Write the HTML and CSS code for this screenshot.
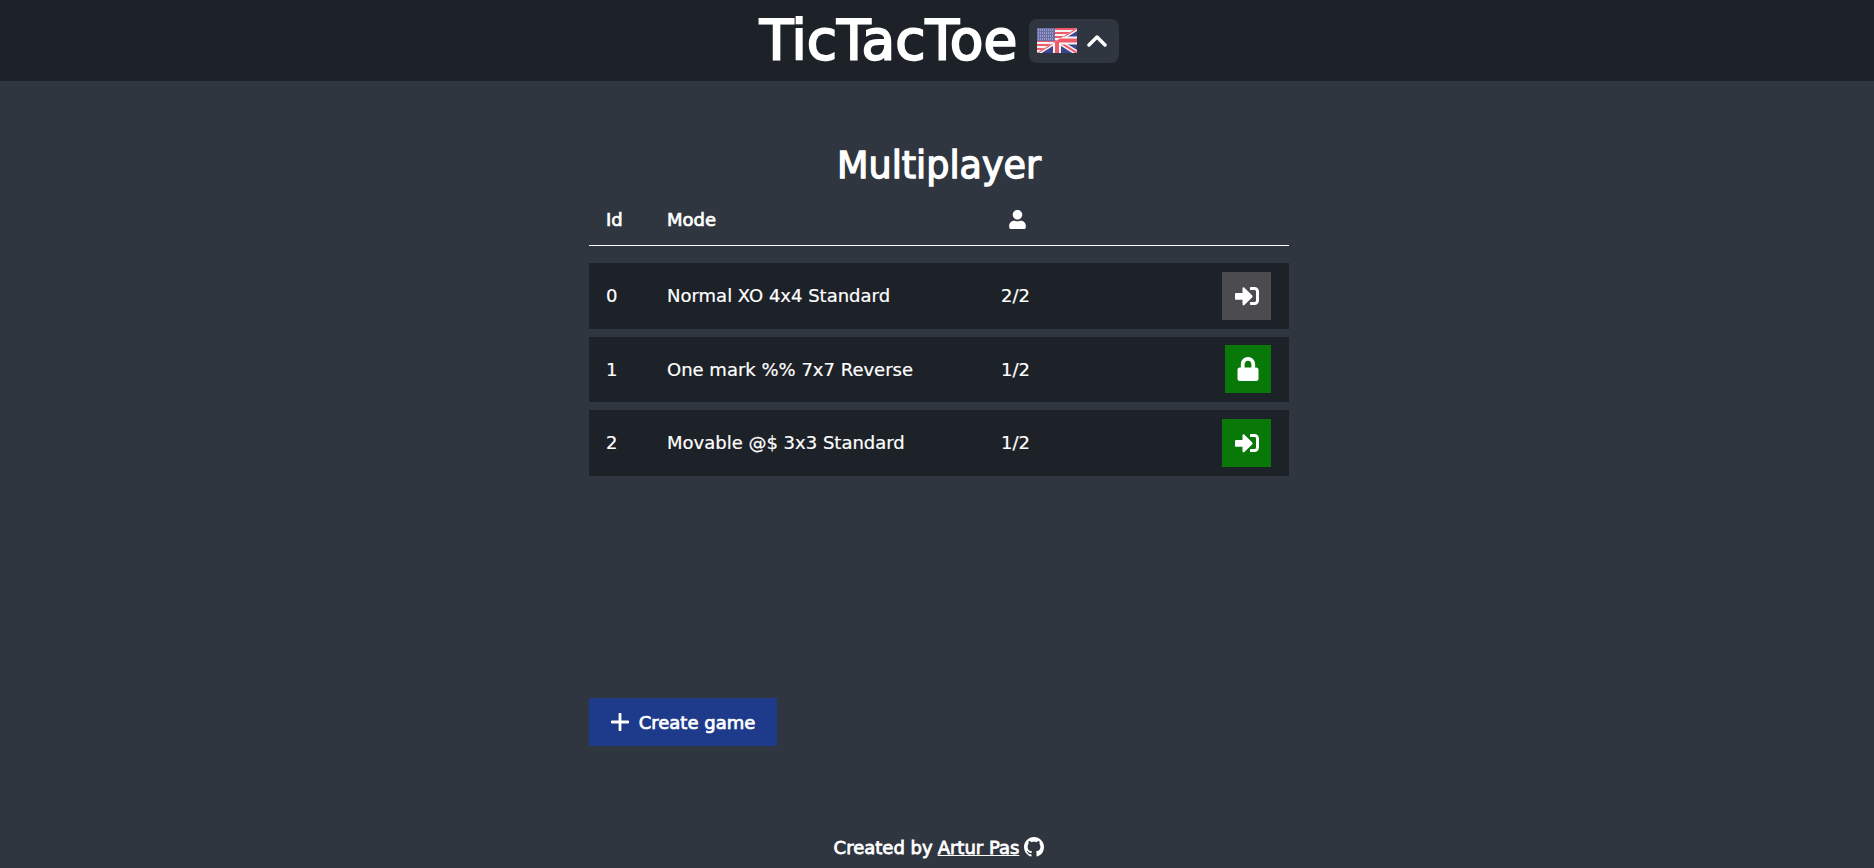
FILE: index.html
```html
<!DOCTYPE html>
<html>

<head>
  <title>TicTacToe</title>
  <link rel="stylesheet" href="styles.css">
</head>

<body>
  <header class="top-bar">
    <h1 class="logo-title">TicTacToe</h1>
    <button type="button" class="lang-switch">
      <svg class="flag" viewBox="0 0 40 25" aria-label="English">
        <defs>
          <clipPath id="flag-shape">
            <rect width="40" height="25" rx="1.5" />
          </clipPath>
          <clipPath id="uk-half">
            <polygon points="40,0 40,25 0,25" />
          </clipPath>
          <clipPath id="us-half">
            <polygon points="0,0 40,0 0,25" />
          </clipPath>
        </defs>
        <g clip-path="url(#flag-shape)">
          <rect width="40" height="25" fill="#f4f4f4" />
          <g clip-path="url(#us-half)">
            <path d="M0 1h40M0 5h40M0 9h40M0 13h40M0 17h40M0 21h40" stroke="#f05a68" stroke-width="2" />
            <rect width="18" height="13" fill="#6a6fa8" />
            <path d="M1 2h16M1 5h16M1 8h16M1 11h16" stroke="#c9cbe0" stroke-width="1" stroke-dasharray="1 1" />
          </g>
          <g clip-path="url(#uk-half)">
            <rect width="40" height="25" fill="#3c4590" />
            <path d="M0 25L40 0M0 0L40 25" stroke="#f4f4f4" stroke-width="5" />
            <path d="M0 25L40 0M0 0L40 25" stroke="#f05a68" stroke-width="2" />
            <path d="M20 0v25M0 12.500h40" stroke="#f4f4f4" stroke-width="8" />
            <path d="M20 0v25M0 12.500h40" stroke="#f05a68" stroke-width="4" />
          </g>
        </g>
      </svg>
      <svg class="chevron" viewBox="0 0 20 12">
        <path d="M2 10l8-8 8 8" />
      </svg>
    </button>
  </header>

  <main class="content">
    <h2 class="page-title">Multiplayer</h2>

    <div class="table-head game-row-grid">
      <span>Id</span>
      <span>Mode</span>
      <span class="players-head">
        <svg class="icon user-icon" viewBox="0 0 448 512">
          <path d="M224 256c70.700 0 128-57.300 128-128S294.700 0 224 0 96 57.300 96 128s57.300 128 128 128zm89.600 32h-16.700c-22.200 10.200-46.900 16-72.900 16s-50.600-5.800-72.900-16h-16.700C60.200 288 0 348.200 0 422.400V464c0 26.500 21.500 48 48 48h352c26.500 0 48-21.500 48-48v-41.600c0-74.200-60.200-134.400-134.400-134.400z" />
        </svg>
      </span>
    </div>

    <div class="game-list">
      <div class="game-row game-row-grid">
        <span>0</span>
        <span>Normal XO 4x4 Standard</span>
        <span>2/2</span>
        <button type="button" class="join-btn disabled">
          <svg class="icon" viewBox="0 0 512 512">
            <path d="M416 448h-84c-6.600 0-12-5.400-12-12v-40c0-6.600 5.400-12 12-12h84c17.700 0 32-14.300 32-32V160c0-17.700-14.300-32-32-32h-84c-6.600 0-12-5.400-12-12V76c0-6.600 5.400-12 12-12h84c53 0 96 43 96 96v192c0 53-43 96-96 96zm-47-201L201 79c-15-15-41-4.500-41 17v96H24c-13.300 0-24 10.700-24 24v96c0 13.300 10.700 24 24 24h136v96c0 21.500 26 32 41 17l168-168c9.300-9.400 9.300-24.600 0-34z" />
          </svg>
        </button>
      </div>

      <div class="game-row game-row-grid">
        <span>1</span>
        <span>One mark %% 7x7 Reverse</span>
        <span>1/2</span>
        <button type="button" class="join-btn locked">
          <svg class="icon" viewBox="0 0 448 512">
            <path d="M400 224h-24v-72C376 68.200 307.800 0 224 0S72 68.200 72 152v72H48c-26.500 0-48 21.500-48 48v192c0 26.500 21.500 48 48 48h352c26.500 0 48-21.500 48-48V272c0-26.500-21.500-48-48-48zm-104 0H152v-72c0-39.700 32.300-72 72-72s72 32.300 72 72v72z" />
          </svg>
        </button>
      </div>

      <div class="game-row game-row-grid">
        <span>2</span>
        <span>Movable @$ 3x3 Standard</span>
        <span>1/2</span>
        <button type="button" class="join-btn">
          <svg class="icon" viewBox="0 0 512 512">
            <path d="M416 448h-84c-6.600 0-12-5.400-12-12v-40c0-6.600 5.400-12 12-12h84c17.700 0 32-14.300 32-32V160c0-17.700-14.300-32-32-32h-84c-6.600 0-12-5.400-12-12V76c0-6.600 5.400-12 12-12h84c53 0 96 43 96 96v192c0 53-43 96-96 96zm-47-201L201 79c-15-15-41-4.500-41 17v96H24c-13.300 0-24 10.700-24 24v96c0 13.300 10.700 24 24 24h136v96c0 21.500 26 32 41 17l168-168c9.300-9.400 9.300-24.600 0-34z" />
          </svg>
        </button>
      </div>
    </div>

    <button type="button" class="create-btn">
      <svg class="plus-icon" viewBox="0 0 18 18">
        <path d="M9 1v16M1 9h16" />
      </svg>
      Create game
    </button>
  </main>

  <footer class="page-footer">
    Created by <a href="#">Artur Pas</a>
    <svg class="github-icon" viewBox="0 0 16 16">
      <path d="M8 0C3.580 0 0 3.580 0 8c0 3.540 2.290 6.530 5.470 7.590.4.070.55-.17.55-.38 0-.19-.01-.82-.01-1.490-2.010.37-2.530-.49-2.690-.94-.09-.23-.48-.94-.82-1.130-.28-.15-.68-.52-.01-.53.63-.01 1.080.58 1.230.82.72 1.210 1.870.87 2.330.66.070-.52.28-.87.51-1.070-1.780-.2-3.640-.89-3.640-3.950 0-.87.31-1.590.82-2.150-.08-.2-.36-1.020.08-2.120 0 0 .67-.21 2.200.82.64-.18 1.320-.27 2-.27.68 0 1.360.09 2 .27 1.530-1.040 2.200-.82 2.200-.82.44 1.100.16 1.920.08 2.120.51.56.82 1.270.82 2.150 0 3.070-1.870 3.750-3.650 3.950.29.25.54.73.54 1.480 0 1.070-.01 1.930-.01 2.200 0 .21.15.46.55.38A8.013 8.013 0 0016 8c0-4.420-3.58-8-8-8z" />
    </svg>
  </footer>
</body>

</html>
```

FILE: styles.css
```css
html,
body {
  height: 100%;
}

body {
  margin: 0;
  display: flex;
  flex-direction: column;
  font-family: "DejaVu Sans", "Noto Sans", sans-serif;
  font-size: 18px;
  color: #fff;
  background-color: #2f3640;
  overflow: hidden;
}

button {
  border: none;
  padding: 0;
  color: #fff;
  font-family: inherit;
  cursor: pointer;
}

.icon {
  display: block;
  fill: #fff;
}

/* Top bar */
.top-bar {
  height: 81px;
  flex-shrink: 0;
  padding-left: 5px;
  display: flex;
  align-items: center;
  justify-content: center;
  gap: 12px;
  background-color: #1d2128;
}

.logo-title {
  margin: 0;
  font-size: 55px;
  font-weight: 400;
  line-height: 1;
  -webkit-text-stroke: 2px #fff;
}

.lang-switch {
  width: 90px;
  height: 44px;
  display: flex;
  align-items: center;
  gap: 10px;
  padding-left: 8px;
  box-sizing: border-box;
  border-radius: 8px;
  background-color: #2f3640;
}

.flag {
  width: 40px;
  height: 25px;
  display: block;
}

.chevron {
  width: 20px;
  height: 12px;
  fill: none;
  stroke: #fff;
  stroke-width: 3.500;
  stroke-linecap: round;
  stroke-linejoin: round;
}

/* Game table */
.content {
  width: 700px;
  padding-left: 4px;
  margin: 0 auto;
  flex-grow: 1;
}

.page-title {
  margin: 63px 0 0;
  text-align: center;
  font-size: 36.500px;
  font-weight: 400;
  line-height: 44px;
  -webkit-text-stroke: 1.3px #fff;
}

.game-row-grid {
  display: grid;
  grid-template-columns: 61px 334px 1fr auto;
  align-items: center;
  padding: 0 18px 0 17px;
}

.table-head {
  height: 58px;
  padding-top: 6px;
  box-sizing: border-box;
  border-bottom: 1px solid #fff;
  -webkit-text-stroke: 0.7px #fff;
}

.players-head {
  padding-left: 8px;
}

.user-icon {
  width: 17px;
  height: 19px;
}

.game-list {
  margin-top: 17px;
  display: flex;
  flex-direction: column;
  gap: 8px;
  height: 435px;
}

.game-row {
  height: 65.500px;
  background-color: #1d2128;
  -webkit-text-stroke: 0.2px #fff;
}

.join-btn {
  width: 49px;
  height: 48px;
  display: flex;
  align-items: center;
  justify-content: center;
  background-color: #087808;
}

.join-btn .icon {
  width: 24px;
  height: 24px;
}

.join-btn.disabled {
  background-color: #4c4c50;
}

.join-btn.locked {
  width: 46px;
  justify-self: end;
}

.create-btn {
  width: 188px;
  height: 48px;
  display: flex;
  align-items: center;
  justify-content: center;
  gap: 10px;
  font-size: 18px;
  background-color: #1e3a8a;
  -webkit-text-stroke: 0.7px #fff;
}

.plus-icon {
  width: 18px;
  height: 18px;
  fill: none;
  stroke: #fff;
  stroke-width: 2.800;
  stroke-linecap: round;
}

/* Footer */
.page-footer {
  height: 42px;
  padding-left: 4px;
  display: flex;
  align-items: center;
  justify-content: center;
  gap: 5px;
  -webkit-text-stroke: 0.8px #fff;
}

.page-footer a {
  color: #fff;
}

.github-icon {
  width: 20px;
  height: 20px;
  fill: #fff;
}
```
